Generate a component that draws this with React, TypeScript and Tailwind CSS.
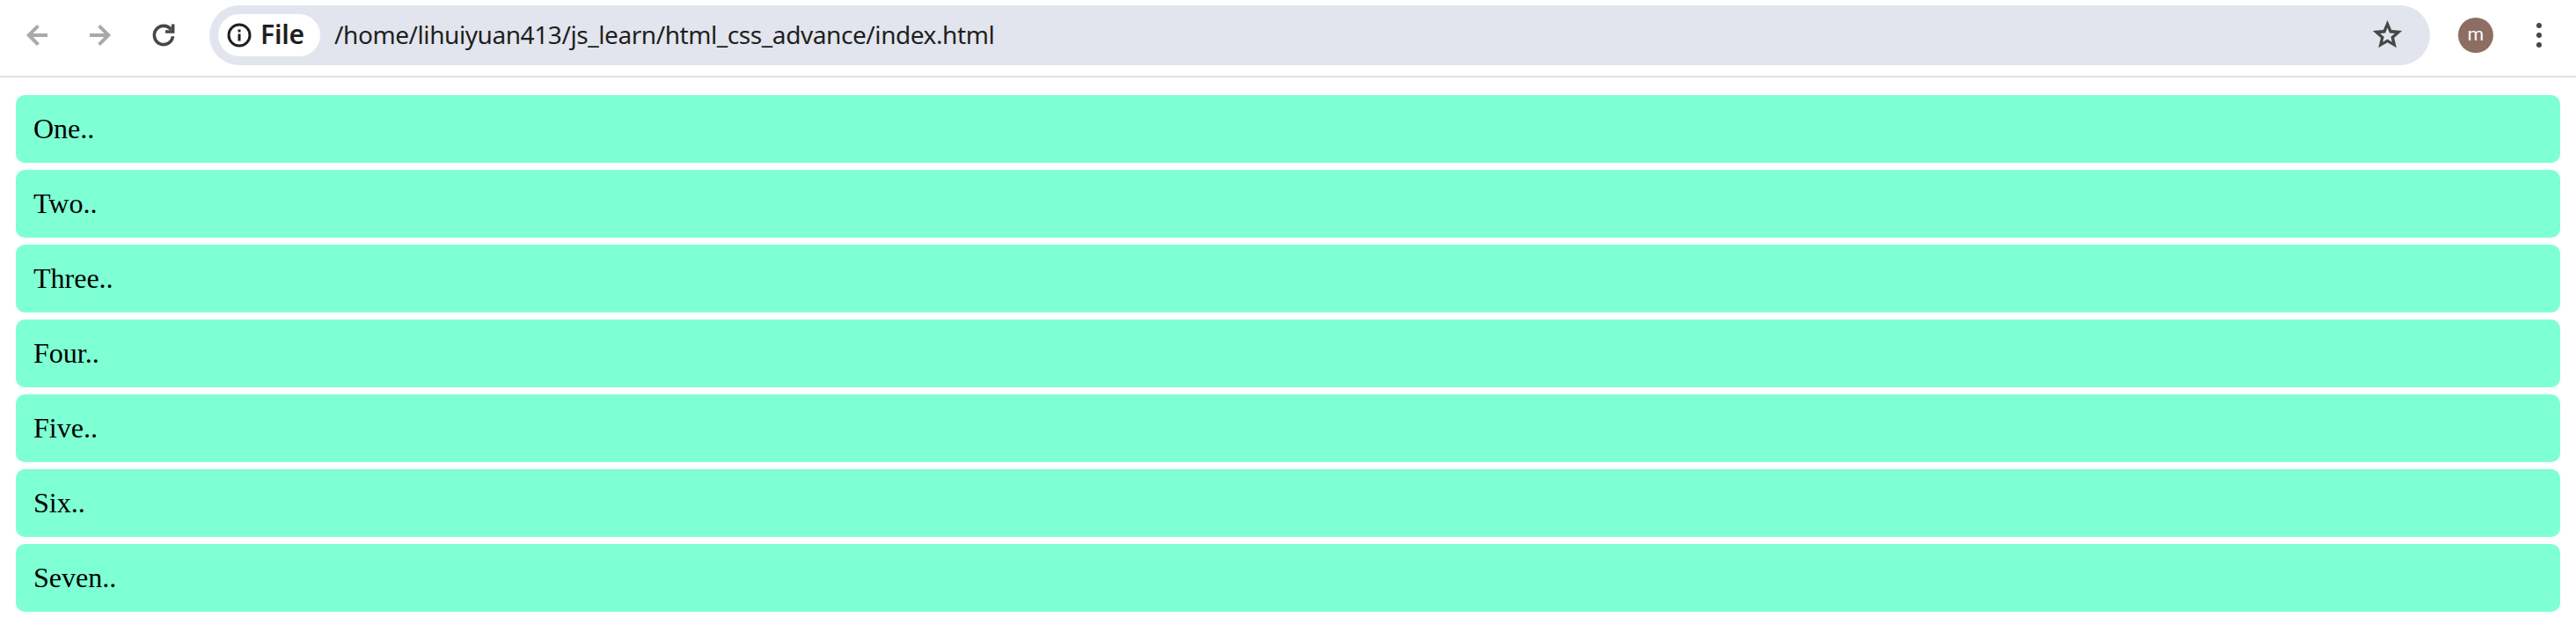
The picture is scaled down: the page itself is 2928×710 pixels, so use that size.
import React from "react";

const rows = ["One..", "Two..", "Three..", "Four..", "Five..", "Six..", "Seven.."];

function Toolbar() {
  return (
    <header className="flex h-[88px] items-start border-b-2 border-[#e0e0e1] bg-white pt-1.5 font-['Noto_Sans',sans-serif] text-[#1f1f1f]">
      <div className="flex h-[68px] w-[238px] shrink-0 items-center gap-9 pl-6">
        <svg className="size-9 shrink-0" viewBox="0 0 36 36" fill="none" stroke="#a9a9a9" strokeWidth="4">
          <path d="M30 18H8M19.4 7.4L8.8 18l10.6 10.6" />
        </svg>
        <svg className="size-9 shrink-0" viewBox="0 0 36 36" fill="none" stroke="#a9a9a9" strokeWidth="4">
          <path d="M6 18h22M16.6 7.4L27.2 18 16.6 28.6" />
        </svg>
        <svg className="size-9 shrink-0" viewBox="0 0 36 36" fill="none" stroke="#474747" strokeWidth="3.6">
          <path d="M28.500 19.300A10.600 10.600 0 1 1 26.500 11.700" />
          <path d="M28.600 5.600v8.400H20" />
        </svg>
      </div>
      <div className="flex h-[68px] grow items-center rounded-full bg-[#e2e5ed] pr-[31px] pl-2.5">
        <div className="flex h-12 w-[116px] shrink-0 items-center rounded-full bg-white pl-2.5">
          <svg className="size-7 shrink-0" viewBox="0 0 28 28">
            <circle cx="14" cy="14" r="12" fill="none" stroke="#1f1f1f" strokeWidth="3" />
            <path d="M12.500 12.500h3v8h-3zM12.500 7.500h3v3h-3z" fill="#1f1f1f" />
          </svg>
          <span className="ml-2.5 pb-0.5 text-[30px] leading-none font-semibold tracking-[-0.2px]">File</span>
        </div>
        <span className="ml-4 grow pb-0.5 text-[28px] leading-none tracking-[-0.42px] whitespace-nowrap">
          /home/lihuiyuan413/js_learn/html_css_advance/index.html
        </span>
        <svg className="mb-0.5 h-8 w-[34px] shrink-0" viewBox="0 0 34 32" fill="#474747" fillRule="evenodd">
          <path d="M16.700 0L21.300 11 33.300 12 24.300 19.900 27 31.300 16.700 25.300 6.400 31.300 9.100 19.900 0 12 12 11zM16.700 8.600L14.200 14.400 8.200 14.900 12.800 18.800 11.400 24.700 16.700 21.500 21.900 24.700 20.500 18.800 25.100 14.900 19.100 14.400z" />
        </svg>
      </div>
      <div className="flex h-[68px] w-[166px] shrink-0 items-center pl-8">
        <div className="flex size-10 items-center justify-center rounded-full bg-[#8d6e63] pb-0.5 font-['Roboto',sans-serif] text-[21px] leading-none text-white">
          m
        </div>
        <svg className="ml-[34px] size-9" viewBox="0 0 36 36" fill="#474747">
          <circle cx="18" cy="7" r="3" />
          <circle cx="18" cy="18" r="3" />
          <circle cx="18" cy="29" r="3" />
        </svg>
      </div>
    </header>
  );
}

export default function App() {
  return (
    <div className="h-[710px] overflow-hidden bg-white">
      <Toolbar />
      <main className="flex flex-col gap-2 px-[18px] pt-5">
        {rows.map((label) => (
          <div
            key={label}
            className="flex h-[77px] items-center rounded-[10px] bg-[#7fffd4] pb-0.5 pl-5 font-['Liberation_Serif',serif] text-[32px] leading-none text-black"
          >
            {label}
          </div>
        ))}
      </main>
    </div>
  );
}
